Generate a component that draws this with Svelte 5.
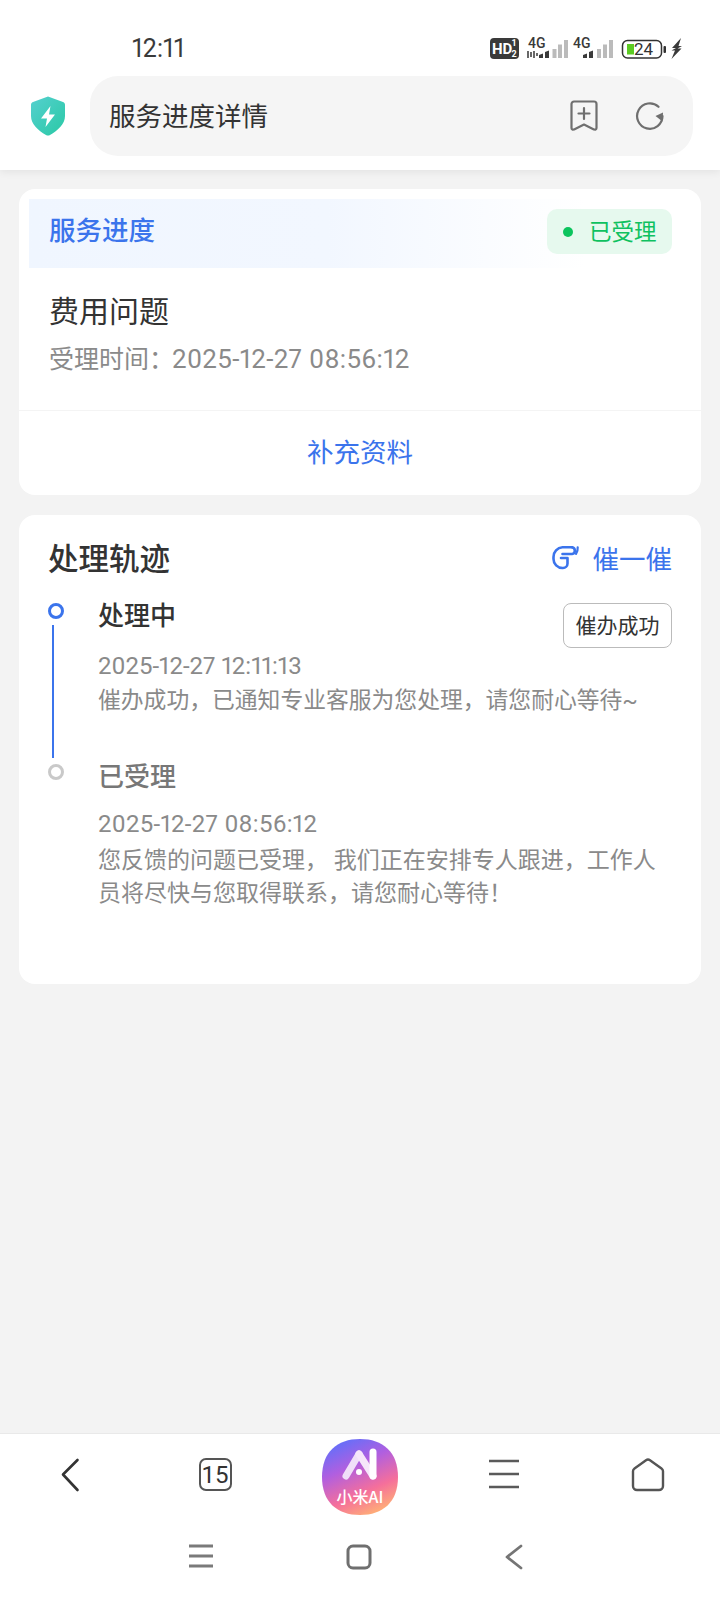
<script>
    const steps = [
        {
            title: '处理中',
            date: '2025-12-27 12:11:13',
            lines: ['催办成功，已通知专业客服为您处理，请您耐心等待~'],
            active: true
        },
        {
            title: '已受理',
            date: '2025-12-27 08:56:12',
            lines: ['您反馈的问题已受理， 我们正在安排专人跟进，工作人', '员将尽快与您取得联系，请您耐心等待！'],
            active: false
        }
    ];
</script>

<div class="page">
    <header class="top">
        <div class="status">
            <span class="clock">12:11</span>
            <svg class="status-icons" width="196" height="24" viewBox="0 0 196 24">
                <rect x="0" y="2" width="29" height="21" rx="4" fill="#3a3a3a" />
                <text x="2" y="18" class="hd">HD</text>
                <text x="21.500" y="10" class="hd-small">1</text>
                <text x="21.500" y="21" class="hd-small">2</text>
                <text x="38" y="12" class="net">4G</text>
                <path d="M38 15v7M41 16v5M44 15v7M47 17v3" stroke="#444" stroke-width="1.600" />
                <path d="M49 22v-3l4-1.500V22zM55 22v-6l4-1.500V22z" fill="#3a3a3a" />
                <path d="M64.500 22V13M70 22V8.500M76 22V4" stroke="#bbb" stroke-width="4" />
                <text x="83" y="12" class="net">4G</text>
                <path d="M93 22v-3l4-1.500V22zM99 22v-6l4-1.500V22z" fill="#3a3a3a" />
                <path d="M109 22V13M115 22V8.500M121 22V4" stroke="#bbb" stroke-width="4" />
                <rect x="132.500" y="4.500" width="39" height="17.500" rx="5" fill="none" stroke="#333" stroke-width="1.500" />
                <rect x="137" y="8" width="7" height="10.500" fill="#5ccb22" />
                <text x="144" y="19" class="batt">24</text>
                <rect x="173.500" y="10" width="2.500" height="7" rx="1" fill="#333" />
                <path d="M191 2l-9 10h4l-4.500 2.500h3.500L181.500 23l10-10.500h-4l4.500-2.500h-3.500z" fill="#3a3a3a" />
            </svg>
        </div>
        <div class="address-row">
            <svg class="shield" width="36" height="40" viewBox="0 0 36 40">
                <defs>
                    <linearGradient id="shieldFill" x1="0" y1="0" x2="1" y2="1">
                        <stop offset="0" stop-color="#55d0cf" />
                        <stop offset="1" stop-color="#2ac9a5" />
                    </linearGradient>
                </defs>
                <path d="M18 .5 33 6c1.500.6 2 1.500 2 3v11c0 8-7 14.500-15 19a4 4 0 0 1-4 0C8 34.500 1 28 1 20V9c0-1.500.5-2.400 2-3z" fill="url(#shieldFill)" />
                <path d="M20.500 10 11 22.500h6L15.500 31 25 18.500h-6z" fill="#fff" />
            </svg>
            <div class="address">
                <span class="address-text">服务进度详情</span>
                <svg class="bookmark" width="28" height="32" viewBox="0 0 28 32" fill="none" stroke="#6f6f6f" stroke-width="2.200" stroke-linejoin="round" stroke-linecap="round">
                    <path d="M4 1.500h20a2.500 2.500 0 0 1 2.500 2.500v24c0 1.500-1.500 2-2.600 1.400L14 24.500 4.100 29.400C3 30 1.500 29.500 1.500 28V4A2.500 2.500 0 0 1 4 1.500z" />
                    <path d="M14 8v11M8.500 13.500h11" />
                </svg>
                <svg class="reload" width="30" height="30" viewBox="0 0 30 30" fill="none">
                    <path d="M27.500 15A12.700 12.700 0 1 1 23.500 5.800" stroke="#6f6f6f" stroke-width="2.200" stroke-linecap="round" />
                    <path d="M28 11.500l-.5 9-7-5.500z" fill="#6f6f6f" />
                </svg>
            </div>
        </div>
    </header>

    <main class="content">
        <section class="card">
            <div class="card-head">
                <span class="head-title">服务进度</span>
                <span class="badge"><i class="badge-dot"></i>已受理</span>
            </div>
            <div class="summary">
                <div class="summary-title">费用问题</div>
                <div class="summary-time">受理时间：<span class="num">2025-12-27 08:56:12</span></div>
            </div>
            <div class="link"><span>补充资料</span></div>
        </section>

        <section class="card track">
            <div class="track-head">
                <h2>处理轨迹</h2>
                <span class="urge">
                    <svg width="28" height="25" viewBox="0 0 28 25" fill="none" stroke="#3b74ec" stroke-width="2.600" stroke-linecap="round" stroke-linejoin="round">
                        <path d="M20 2.300H10.500A9.500 9.500 0 0 0 1.500 12v2a9 9 0 0 0 9 9h.5a4.500 4.500 0 0 0 4.500-4.500V13H9" />
                        <path d="M20 2.300a3.400 3.400 0 0 1 0 6.700h-9.500" />
                        <path d="M25.700 2.300c.2 2.500-.4 4.500-1.700 6.500" stroke-width="2.200" />
                    </svg>
                    催一催
                </span>
            </div>

            {#each steps as step, i}
                <div class="step">
                    <div class="rail">
                        <span class="dot" class:on={step.active}></span>
                        {#if i < steps.length - 1}<span class="rail-line"></span>{/if}
                    </div>
                    <div class="step-body">
                        <div class="step-row">
                            <span class="step-title" class:muted={!step.active}>{step.title}</span>
                            {#if step.active}<span class="urged">催办成功</span>{/if}
                        </div>
                        <div class="step-date num">{step.date}</div>
                        {#each step.lines as line}
                            <div class="step-text">{line}</div>
                        {/each}
                    </div>
                </div>
            {/each}
        </section>
    </main>

    <div class="toolbar">
        <span class="tool">
            <svg width="20" height="34" viewBox="0 0 20 34" fill="none" stroke="#333" stroke-width="2.600" stroke-linecap="round" stroke-linejoin="round"><path d="M17.500 2 3 16.500 17.500 32" /></svg>
        </span>
        <span class="tool">
            <span class="tabs">15</span>
        </span>
        <span class="tool">
            <svg class="ai" width="78" height="78" viewBox="0 0 78 78">
                <defs>
                    <linearGradient id="aiFill" x1="0.250" y1="0" x2="0.700" y2="1">
                        <stop offset="0" stop-color="#5f70fb" />
                        <stop offset="0.350" stop-color="#b05fe0" />
                        <stop offset="0.700" stop-color="#f56f9b" />
                        <stop offset="1" stop-color="#ffb275" />
                    </linearGradient>
                </defs>
                <path d="M39 1C62 1 77 14 77 39S62 77 39 77 1 64 1 39 16 1 39 1z" fill="url(#aiFill)" />
                <path d="M25 38 38 16" stroke="#f0def8" stroke-width="7" stroke-linecap="round" fill="none" />
                <path d="M38 16 52 38" stroke="#f6e6fa" stroke-width="7" stroke-linecap="round" fill="none" />
                <path d="M52 14v24" stroke="#fff" stroke-width="7" stroke-linecap="round" />
                <circle cx="38" cy="34" r="3" fill="#fff" />
                <text x="39" y="65" class="ai-label">小米AI</text>
            </svg>
        </span>
        <span class="tool">
            <svg width="32" height="32" viewBox="0 0 32 32" stroke="#5a5a5a" stroke-width="2.600"><path d="M1 3h30M1 16h30M1 29h30" /></svg>
        </span>
        <span class="tool">
            <svg width="34" height="34" viewBox="0 0 34 34" fill="none" stroke="#555" stroke-width="2.400" stroke-linejoin="round"><path d="M15 2.200a3.500 3.500 0 0 1 4 0l11.500 8.300a3.500 3.500 0 0 1 1.500 3V28a4 4 0 0 1-4 4H6a4 4 0 0 1-4-4V13.500a3.500 3.500 0 0 1 1.500-3z" /></svg>
        </span>
    </div>

    <nav class="sysnav">
        <svg width="24" height="24" viewBox="0 0 24 24" stroke="#7a7a7a" stroke-width="2.800"><path d="M0 2h24M0 12h24M0 22h24" /></svg>
        <svg width="26" height="26" viewBox="0 0 26 26" fill="none" stroke="#6f6f6f" stroke-width="3"><rect x="2" y="2" width="22" height="22" rx="5" /></svg>
        <svg width="18" height="26" viewBox="0 0 18 26" fill="none" stroke="#757575" stroke-width="2.800" stroke-linecap="round" stroke-linejoin="round"><path d="M16 2 2 13l14 11" /></svg>
    </nav>
</div>

<style>
    :global(body) {
        margin: 0;
        background: #f3f3f3;
    }

    .page {
        display: flex;
        flex-direction: column;
        height: 1600px;
        font-family: Roboto, "Noto Sans CJK SC", sans-serif;
        color: #333;
    }

    .top {
        background: #fff;
        padding-bottom: 14px;
        box-shadow: 0 2px 8px rgba(0, 0, 0, 0.07);
        position: relative;
    }

    .status {
        height: 76px;
        padding: 0 34px 0 132px;
        display: flex;
        align-items: center;
        justify-content: space-between;
        box-sizing: border-box;
    }

    .clock {
        font-size: 25px;
        color: #3a3a3a;
        margin-top: 20px;
        font-feature-settings: "pnum";
    }

    .status-icons {
        margin-top: 19px;
    }

    .hd {
        font: 700 15px Roboto, sans-serif;
        fill: #fff;
    }

    .hd-small {
        font: 700 9px Roboto, sans-serif;
        fill: #fff;
    }

    .net {
        font: 500 14px Roboto, sans-serif;
        fill: #3a3a3a;
    }

    .batt {
        font: 400 17px Roboto, sans-serif;
        fill: #333;
    }

    .address-row {
        display: flex;
        align-items: center;
        padding: 0 27px 0 30px;
    }

    .shield {
        margin-right: 24px;
        flex: none;
    }

    .address {
        flex: 1;
        height: 80px;
        background: #f5f5f5;
        border-radius: 28px;
        display: flex;
        align-items: center;
        padding: 0 28px 0 19px;
    }

    .address-text {
        flex: 1;
        font-size: 26.500px;
        color: #333;
        margin-top: -4px;
    }

    .bookmark {
        margin-right: 37px;
    }

    .content {
        flex: 1;
        padding: 19px;
        display: flex;
        flex-direction: column;
        gap: 20px;
    }

    .card {
        background: #fff;
        border-radius: 16px;
    }

    .card:first-child {
        padding-top: 10px;
    }

    .card-head {
        height: 69px;
        margin: 0 10px;
        padding: 0 19px 0 20px;
        display: flex;
        align-items: center;
        justify-content: space-between;
        background: linear-gradient(90deg, #f0f6ff 0%, #f2f7ff 45%, #ffffff 84%);
    }

    .head-title {
        font-size: 26.500px;
        font-weight: 500;
        color: #3b74ec;
        margin-top: -11px;
    }

    .badge {
        width: 125px;
        height: 45px;
        box-sizing: border-box;
        padding: 0 0 4px 16px;
        border-radius: 10px;
        background: #e6f9ee;
        color: #0fc160;
        font-size: 22.500px;
        display: flex;
        align-items: center;
        margin-top: -4px;
    }

    .badge-dot {
        width: 10px;
        height: 10px;
        border-radius: 50%;
        background: #0cc45d;
        margin: 4px 16px 0 0;
    }

    .summary {
        padding: 24px 30px 34px;
    }

    .summary-title {
        font-size: 30px;
        line-height: 40px;
        color: #333;
    }

    .summary-time {
        margin-top: 10px;
        margin-bottom: -1px;
        font-size: 25px;
        line-height: 34px;
        color: #8a8a8a;
    }

    .num {
        font-family: Roboto, sans-serif;
        font-feature-settings: "pnum";
    }

    .summary-time .num {
        font-size: 26px;
        margin-left: -2px;
        letter-spacing: 0.3px;
    }

    .link {
        height: 84px;
        border-top: 1px solid #f4f4f4;
        display: flex;
        align-items: center;
        justify-content: center;
        font-size: 26.500px;
        color: #3b74ec;
    }

    .link span {
        margin-top: -6px;
    }

    .track {
        padding: 25px 29px 74px;
    }

    .track-head {
        height: 40px;
        margin-bottom: 18px;
        display: flex;
        align-items: center;
        justify-content: space-between;
    }

    h2 {
        margin: -6px 0 0;
        font-size: 30.500px;
        font-weight: 500;
        color: #333;
    }

    .urge {
        display: flex;
        align-items: center;
        gap: 13px;
        font-size: 26.500px;
        color: #3b74ec;
        margin-top: -6px;
    }

    .step {
        display: flex;
    }

    .rail {
        width: 50px;
        flex: none;
        display: flex;
        flex-direction: column;
        padding-top: 5px;
        box-sizing: border-box;
    }

    .dot {
        width: 16px;
        height: 16px;
        box-sizing: border-box;
        border-radius: 50%;
        border: 3.500px solid #c9c9c9;
    }

    .dot.on {
        border-color: #3b74ec;
    }

    .rail-line {
        flex: 1;
        width: 2px;
        margin: 6px 0 1px 4px;
        background: #3b74ec;
    }

    .step-body {
        flex: 1;
    }

    .step-row {
        min-height: 48px;
        display: flex;
        justify-content: space-between;
        align-items: flex-start;
    }

    .step-title {
        font-size: 26px;
        line-height: 36px;
        font-weight: 500;
        color: #333;
    }

    .step-title.muted {
        color: #777;
    }

    .urged {
        width: 109px;
        height: 45px;
        margin: 5px 0 1px;
        padding-bottom: 3px;
        box-sizing: border-box;
        border: 1px solid #bbb;
        border-radius: 8px;
        display: flex;
        align-items: center;
        justify-content: center;
        font-size: 21px;
        color: #333;
    }

    .step-date {
        font-size: 24px;
        line-height: 34px;
        margin-bottom: 1px;
        color: #8a8a8a;
    }

    .step-text {
        font-size: 22.800px;
        line-height: 34px;
        color: #8a8a8a;
    }

    .step:not(:last-of-type) .step-text:last-child {
        margin-bottom: 41px;
    }

    .step + .step .step-date {
        margin-bottom: 3px;
        letter-spacing: 0.27px;
    }

    .step + .step .step-text {
        font-size: 23px;
        line-height: 33px;
    }

    .toolbar {
        height: 83px;
        box-sizing: border-box;
        background: #fff;
        border-top: 1px solid #e9e9e9;
        padding-top: 4px;
        display: grid;
        grid-template-columns: repeat(5, 1fr);
    }

    .tool {
        display: flex;
        align-items: flex-start;
        justify-content: center;
        padding-top: 20px;
    }

    .tool:nth-child(1) {
        padding-right: 4px;
    }

    .tool:nth-child(3) {
        padding-top: 0;
    }

    .tabs {
        width: 33px;
        height: 33px;
        margin-left: -2px;
        box-sizing: border-box;
        border: 2.400px solid #555;
        border-radius: 7px;
        display: flex;
        align-items: center;
        justify-content: center;
        font-size: 24px;
        color: #333;
    }

    .ai-label {
        font: 500 16px "Noto Sans CJK SC", sans-serif;
        fill: #fff;
        text-anchor: middle;
    }

    .sysnav {
        height: 84px;
        background: #fff;
        padding-top: 28px;
        padding-right: 8px;
        box-sizing: border-box;
        display: flex;
        justify-content: center;
        align-items: flex-start;
        gap: 133px;
    }
</style>
